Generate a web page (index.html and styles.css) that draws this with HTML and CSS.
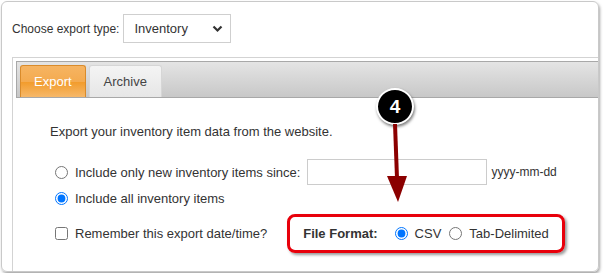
FILE: index.html
```html
<!DOCTYPE html>
<html lang="en">
<head>
  <meta charset="UTF-8">
  <title>Export</title>
  <link rel="stylesheet" href="styles.css">
</head>
<body>
  <div class="frame">
    <div class="type-row">
      <label for="exportType">Choose export type:</label>
      <div class="select" id="exportType">
        <span>Inventory</span>
        <svg width="11" height="8" viewBox="0 0 11 8"><path d="M1.5 1.5 L5.5 5.5 L9.5 1.5" fill="none" stroke="#333" stroke-width="2.2"/></svg>
      </div>
    </div>

    <div class="panel">
      <div class="tabbar">
        <div class="tab active">Export</div>
        <div class="tab">Archive</div>
      </div>
      <div class="panel-body">
        <p class="intro">Export your inventory item data from the website.</p>
        <div class="option">
          <input type="radio" name="range" id="rangeNew">
          <label for="rangeNew">Include only new inventory items since:</label>
          <input type="text" class="date-input">
          <span class="hint">yyyy-mm-dd</span>
        </div>
        <div class="option">
          <input type="radio" name="range" id="rangeAll" checked>
          <label for="rangeAll">Include all inventory items</label>
        </div>
        <div class="option last">
          <input type="checkbox" id="remember">
          <label for="remember">Remember this export date/time?</label>
          <div class="format-box">
            <strong>File Format:</strong>
            <input type="radio" name="format" id="fmtCsv" checked>
            <label for="fmtCsv">CSV</label>
            <input type="radio" name="format" id="fmtTab">
            <label for="fmtTab">Tab-Delimited</label>
          </div>
        </div>
      </div>
    </div>
  </div>

  <!-- step annotation -->
  <div class="badge">4</div>
  <svg class="arrow" width="30" height="82" viewBox="0 0 30 82">
    <path d="M13 0 L15 54" stroke="#8b0000" stroke-width="4" fill="none"/>
    <path d="M5 52 L25 52 L16 78 Z" fill="#8b0000"/>
  </svg>
</body>
</html>
```

FILE: styles.css
```css
/* Basic Reset */
* {
  box-sizing: border-box;
  margin: 0;
  padding: 0;
}
body {
  font-family: "Liberation Sans", Arial, sans-serif;
  font-size: 13px;
  color: #333;
  background-color: #fff;
  position: relative;
}
/* Outer screenshot frame */
.frame {
  margin: 1px;
  width: 598px;
  height: 271px;
  padding: 12px 0 0 10px;
  border: 1px solid #c9c9c9;
  border-radius: 6px;
  box-shadow: 1px 2px 3px rgba(0, 0, 0, 0.35);
  overflow: hidden;
}
/* Export type row */
.type-row {
  display: flex;
  align-items: center;
  gap: 4px;
  height: 29px;
  font-size: 12px;
}
.select {
  display: flex;
  align-items: center;
  justify-content: space-between;
  width: 108px;
  height: 29px;
  padding: 0 7px 0 10px;
  border: 1px solid #cfcfcf;
  font-size: 13px;
}
/* Tab panel */
.panel {
  margin-top: 14px;
  height: 300px;
  padding: 3px 0 0 3px;
  border: 1px solid #d3d3d3;
  border-right: none;
}
.tabbar {
  display: flex;
  gap: 3px;
  height: 37px;
  padding: 3px 0 0 3px;
  border: 1px solid #a8a8a8;
  border-right: none;
  background: linear-gradient(#e4e4e4, #c8c8c8);
}
.tab {
  height: 32px;
  padding: 0 14px;
  line-height: 32px;
  font-size: 13px;
  color: #444;
  border: 1px solid #d6d6d6;
  border-bottom: none;
  border-radius: 3px 3px 0 0;
  background: linear-gradient(#f4f4f4, #e6e6e6);
}
.tab.active {
  padding: 0 13px;
  color: #fff;
  border-color: #d98b2b;
  background: linear-gradient(#f6b462 0%, #f4ab50 50%, #f29c2c 52%, #f6b86a 100%);
}
.panel-body {
  padding: 26px 0 0 34px;
}
.intro {
  margin-bottom: 20px;
}
.option {
  display: flex;
  align-items: center;
  gap: 6px;
  height: 26px;
  margin-left: 4px;
}
.option input[type="radio"],
.option input[type="checkbox"] {
  width: 13px;
  height: 13px;
  margin: 0 1px;
}
.date-input {
  width: 180px;
  height: 26px;
  margin-left: 1px;
  border: 1px solid #cccccc;
}
.hint {
  font-size: 12px;
  margin-left: -2px;
}
.option.last {
  margin-top: 3px;
  height: 39px;
}
/* Highlighted file format group */
.format-box {
  display: flex;
  align-items: center;
  gap: 6px;
  height: 39px;
  margin-left: 14px;
  padding: 0 12px 0 13px;
  border: 3px solid #e8000b;
  border-radius: 8px;
  box-shadow: 2px 2px 3px rgba(0, 0, 0, 0.4);
}
.format-box strong {
  margin-right: 10px;
}
.format-box label {
  margin-right: 1px;
}
/* Step annotation */
.badge {
  position: absolute;
  left: 376px;
  top: 88px;
  width: 38px;
  height: 37px;
  border: 2px solid #fff;
  border-radius: 50%;
  background-color: #000;
  color: #fff;
  font-size: 19px;
  font-weight: bold;
  line-height: 33px;
  text-align: center;
  box-shadow: 1px 2px 3px rgba(0, 0, 0, 0.5);
}
.arrow {
  position: absolute;
  left: 382px;
  top: 124px;
}
```
